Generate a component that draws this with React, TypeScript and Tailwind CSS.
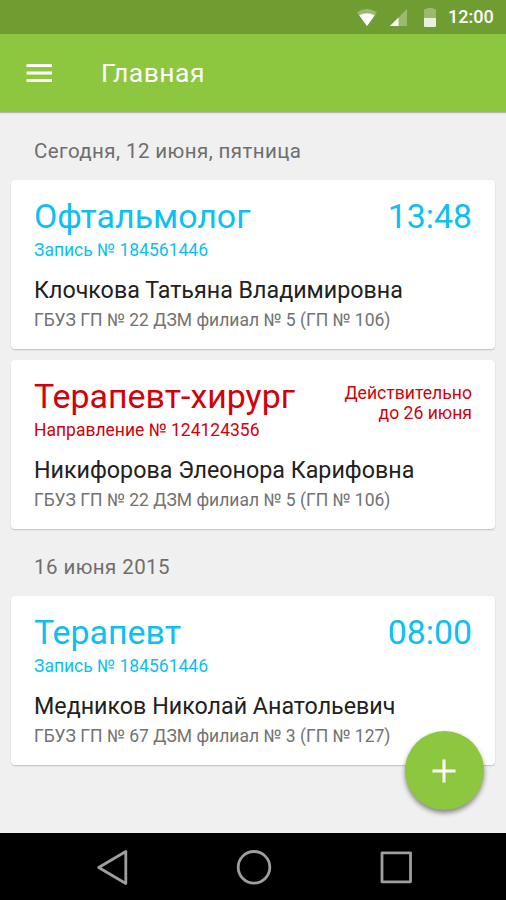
import React from 'react';
import clsx from 'clsx';

interface Appointment {
    id: number;
    speciality: string;
    record: string;
    doctor: string;
    clinic: string;
    time?: string;
    validUntil?: string[];
}

interface Day {
    title: string;
    appointments: Appointment[];
}

const days: Day[] = [
    {
        title: 'Сегодня, 12 июня, пятница',
        appointments: [
            {
                id: 1,
                speciality: 'Офтальмолог',
                record: 'Запись № 184561446',
                doctor: 'Клочкова Татьяна Владимировна',
                clinic: 'ГБУЗ ГП № 22 ДЗМ филиал № 5 (ГП № 106)',
                time: '13:48',
            },
            {
                id: 2,
                speciality: 'Терапевт-хирург',
                record: 'Направление № 124124356',
                doctor: 'Никифорова Элеонора Карифовна',
                clinic: 'ГБУЗ ГП № 22 ДЗМ филиал № 5 (ГП № 106)',
                validUntil: ['Действительно', 'до 26 июня'],
            },
        ],
    },
    {
        title: '16 июня 2015',
        appointments: [
            {
                id: 3,
                speciality: 'Терапевт',
                record: 'Запись № 184561446',
                doctor: 'Медников Николай Анатольевич',
                clinic: 'ГБУЗ ГП № 67 ДЗМ филиал № 3 (ГП № 127)',
                time: '08:00',
            },
        ],
    },
];

const StatusBar: React.FC = () => (
    <div className="flex h-[34px] shrink-0 items-center justify-end bg-[#709d31] pr-[13px] text-white">
        <svg className="h-[17px] w-5" viewBox="0 0 20 17">
            <path d="M0 3.2Q10 -3.2 20 3.2L10 17Z" fill="#fff" opacity=".3" />
            <path d="M2.2 6.2Q10 2.2 17.8 6.2L10 17Z" fill="#fff" />
        </svg>
        <svg className="ml-[13px] h-[17px] w-[17px]" viewBox="0 0 17 17">
            <path d="M0 17L17 0V17Z" fill="#fff" opacity=".3" />
            <path d="M0 17L8.5 8.5V17Z" fill="#fff" />
        </svg>
        <svg className="ml-[17px] h-[19px] w-3" viewBox="0 0 12 19">
            <path d="M0 2Q0 1 1 1H3V0H9V1H11Q12 1 12 2V10H0Z" fill="#fff" opacity=".3" />
            <path d="M0 10H12V18Q12 19 11 19H1Q0 19 0 18Z" fill="#fff" opacity=".85" />
        </svg>
        <span className="ml-3 w-[45px] text-right text-[18px] leading-[34px] font-medium">12:00</span>
    </div>
);

const AppBar: React.FC = () => (
    <header className="z-10 flex h-[78px] shrink-0 items-center bg-[#8dc63f] pl-[26px] text-white shadow-[0_1px_1px_rgba(0,0,0,0.25)]">
        <button>
            <svg className="h-[18px] w-[26px]" viewBox="0 0 26 18" fill="#fff">
                <path d="M.5 0H26V3H.5ZM.5 7.5H26V10.5H.5ZM.5 15H26V18H.5Z" />
            </svg>
        </button>
        <h1 className="ml-[49px] text-[26.5px] leading-8 tracking-[0.45px]">Главная</h1>
    </header>
);

const AppointmentCard: React.FC<{ item: Appointment }> = ({ item }) => (
    <article className="h-[169px] rounded-[4px] bg-white px-[23px] pt-[17px] shadow-[0_1px_1.5px_rgba(0,0,0,0.2)]">
        <div className={clsx('flex justify-between', item.time ? 'text-[#0dbff2]' : 'text-[#d0020b]')}>
            <div>
                <h3 className="text-[33.9px] leading-10">{item.speciality}</h3>
                <p className="mt-[3px] text-[17.5px] leading-5">{item.record}</p>
            </div>
            {item.time && <time className="text-[33.8px] leading-10">{item.time}</time>}
            {item.validUntil && (
                <p className="mt-1.5 text-right text-[17.6px] leading-5">
                    {item.validUntil.map(line => (
                        <span key={line} className="block">{line}</span>
                    ))}
                </p>
            )}
        </div>
        <p className="mt-4 text-[23.25px] leading-7 text-[#212121]">{item.doctor}</p>
        <p className="mt-1.5 text-[17.5px] leading-5 text-[#727272]">{item.clinic}</p>
    </article>
);

const NavigationBar: React.FC = () => (
    <nav className="flex h-[67px] shrink-0 items-center justify-between bg-black pr-[94px] pl-[96px] text-[#9e9e9e]">
        <svg className="h-9 w-8" viewBox="0 0 32 36" fill="none" stroke="currentColor" strokeWidth="2.8" strokeLinejoin="round">
            <path d="M29.8 2.5V34.5L2.7 18.5Z" />
        </svg>
        <svg className="h-9 w-9" viewBox="0 0 36 36" fill="none" stroke="currentColor" strokeWidth="2.8">
            <circle cx="18" cy="18.3" r="15.8" />
        </svg>
        <svg className="h-9 w-8" viewBox="0 0 32 36" fill="none" stroke="currentColor" strokeWidth="2.8" strokeLinejoin="round">
            <rect x="2" y="3.8" width="28.5" height="29" />
        </svg>
    </nav>
);

export default function App() {
    return (
        <div className="relative flex h-[900px] w-[506px] flex-col overflow-hidden bg-[#f0f0f0] font-['Roboto','Noto_Sans',sans-serif]">
            <StatusBar />
            <AppBar />
            <main className="flex-1 px-[11px]">
                {days.map(day => (
                    <section key={day.title}>
                        <h2 className="flex h-[67.5px] items-center pt-2.5 pl-[23px] text-[20.5px] leading-6 tracking-[0.42px] text-[#6e6e6e]">
                            {day.title}
                        </h2>
                        <div className="flex flex-col gap-[11px]">
                            {day.appointments.map(item => (
                                <AppointmentCard key={item.id} item={item} />
                            ))}
                        </div>
                    </section>
                ))}
            </main>
            <button className="absolute right-[22.5px] bottom-[90px] z-20 flex size-[79px] items-center justify-center rounded-full bg-[#8dc63f] shadow-[0_3px_5px_rgba(0,0,0,0.45)]">
                <svg className="size-6" viewBox="0 0 24 24" stroke="#fff" strokeWidth="3">
                    <path d="M12 .5V23.5M.5 12H23.5" />
                </svg>
            </button>
            <NavigationBar />
        </div>
    );
}
